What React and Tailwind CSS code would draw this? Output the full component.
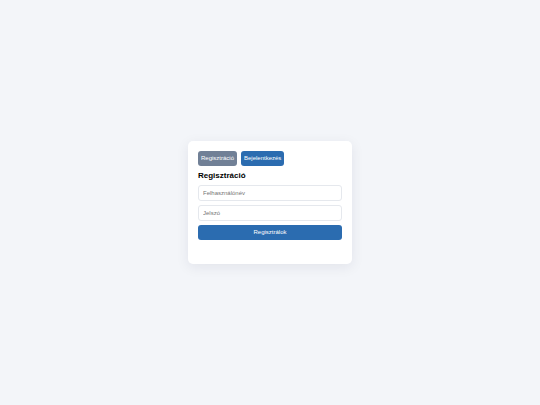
import { useState } from 'react'

function Tab({ label, active, onClick }) {
  return (
    <button
      type="button"
      onClick={onClick}
      className={`rounded-[3px] px-[3px] py-1 text-[6px] leading-[7px] text-white ${active ? 'bg-[#718096]' : 'bg-[#2b6cb0]'}`}
    >
      {label}
    </button>
  )
}

function Field({ label, type = 'text', value, onChange }) {
  return (
    <input
      type={type}
      aria-label={label}
      placeholder={label}
      value={value}
      onChange={e => onChange(e.target.value)}
      className="block h-4 w-full rounded-[3px] border border-[#e5e8ed] bg-white px-1 text-[6px] leading-[7px] outline-none placeholder:text-[#757575]"
    />
  )
}

export default function App() {
  const [mode, setMode] = useState('register')
  const [username, setUsername] = useState('')
  const [password, setPassword] = useState('')
  const registering = mode === 'register'

  return (
    <main className="flex min-h-screen items-center justify-center bg-[#f3f5f9] font-['Liberation_Sans',Arial,sans-serif] text-black">
      <div className="w-full max-w-[164px] rounded-[5px] bg-white px-[10px] pt-[10px] pb-6 shadow-[0_3px_13px_rgba(20,30,60,0.08)]">
        <div className="flex gap-1">
          <Tab label="Regisztráció" active={registering} onClick={() => setMode('register')} />
          <Tab label="Bejelentkezés" active={!registering} onClick={() => setMode('login')} />
        </div>

        <form onSubmit={e => e.preventDefault()}>
          <h2 className="my-1 text-[8px] leading-[11px] font-bold">
            {registering ? 'Regisztráció' : 'Bejelentkezés'}
          </h2>
          <div className="space-y-1">
            <Field label="Felhasználónév" value={username} onChange={setUsername} />
            <Field label="Jelszó" type="password" value={password} onChange={setPassword} />
            <button
              type="submit"
              className="block w-full rounded-[3px] bg-[#2b6cb0] py-1 text-[6px] leading-[7px] text-white"
            >
              {registering ? 'Regisztrálok' : 'Belépek'}
            </button>
          </div>
        </form>
      </div>
    </main>
  )
}
